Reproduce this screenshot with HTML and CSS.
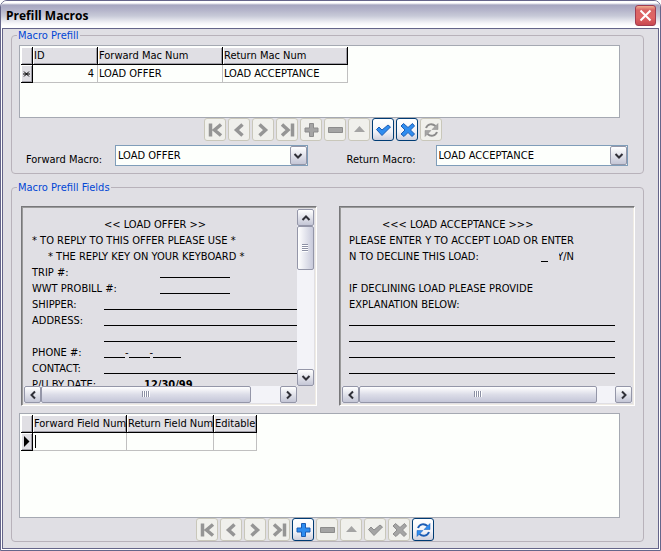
FILE: index.html
```
<!DOCTYPE html>
<html lang="en">
<head>
    <meta charset="UTF-8">
    <meta name="viewport" content="width=device-width, initial-scale=1.0">
    <title>Prefill Macros</title>
    <link rel="stylesheet" href="styles.css">
</head>
<body>
    <svg class="sprite" aria-hidden="true">
        <symbol id="i-first" viewBox="0 0 22 23"><path class="s" d="M6.500 5.500v13M17 6.500L10.500 12l6.500 5.500"/></symbol>
        <symbol id="i-prev" viewBox="0 0 22 23"><path class="s" d="M14.500 6.500L8.500 12l6 5.500"/></symbol>
        <symbol id="i-next" viewBox="0 0 22 23"><path class="s" d="M7.500 6.500L13.500 12l-6 5.500"/></symbol>
        <symbol id="i-last" viewBox="0 0 22 23"><path class="s" d="M16.500 5.500v13M6 6.500l6 5.500-6 5.500"/></symbol>
        <symbol id="i-add" viewBox="0 0 22 23"><path class="o" d="M9.500 5.500h4v4.500h4.500v4h-4.500v4.500h-4v-4.500h-4.500v-4h4.500z"/></symbol>
        <symbol id="i-del" viewBox="0 0 22 23"><path class="o" d="M4.500 9.500h14v5h-14z"/></symbol>
        <symbol id="i-up" viewBox="0 0 22 23"><path class="f" d="M11.500 8l5.500 6h-11z"/></symbol>
        <symbol id="i-ok" viewBox="0 0 22 23"><path class="o" d="M4.500 11.500l2.500-2.500 3 3 6-5 2.500 2-8.500 8.500z"/></symbol>
        <symbol id="i-cancel" viewBox="0 0 22 23"><path class="o" d="M5 8l2.500-2.500 4.500 4 4.500-4L18.500 8l-4 4 4 4-2.500 2.500-4-4-4 4L5 16l4-4z"/></symbol>
        <symbol id="i-refresh" viewBox="0 0 22 23"><path class="r" d="M6 10c1.500-4 6-5 9.500-2M17 14c-1.500 4-6 5-9.500 2"/><path class="o thin" d="M18 5.500v6h-6zM5 18.500v-6h6z"/></symbol>
        <symbol id="a-down" viewBox="0 0 10 10"><path class="a" d="M1.500 3L5 6.500 8.500 3"/></symbol>
        <symbol id="a-up" viewBox="0 0 10 10"><path class="a" d="M1.500 7L5 3.500 8.500 7"/></symbol>
        <symbol id="a-left" viewBox="0 0 10 10"><path class="a" d="M7 1.500L3.500 5 7 8.500"/></symbol>
        <symbol id="a-right" viewBox="0 0 10 10"><path class="a" d="M3 1.500L6.500 5 3 8.500"/></symbol>
    </svg>

    <div class="window">
        <header class="titlebar">
            <h1>Prefill Macros</h1>
            <button class="close" aria-label="Close">
                <svg viewBox="0 0 19 19"><path d="M4.500 4.500l10 10M14.500 4.500l-10 10"/></svg>
            </button>
        </header>

        <main class="content">
            <fieldset class="macros">
                <legend>Macro Prefill</legend>
                <div class="grid">
                    <table>
                        <thead>
                            <tr><th class="mark"></th><th class="id">ID</th><th class="mac">Forward Mac Num</th><th class="mac">Return Mac Num</th></tr>
                        </thead>
                        <tbody>
                            <tr>
                                <th class="mark"><svg viewBox="0 0 11 17"><path class="star" d="M2 9h7M3 6.500l5 5M8 6.500l-5 5"/></svg></th>
                                <td class="num">4</td><td>LOAD OFFER</td><td>LOAD ACCEPTANCE</td>
                            </tr>
                        </tbody>
                    </table>
                </div>
                <div class="nav">
                    <button disabled aria-label="First"><svg><use href="#i-first"/></svg></button>
                    <button disabled aria-label="Previous"><svg><use href="#i-prev"/></svg></button>
                    <button disabled aria-label="Next"><svg><use href="#i-next"/></svg></button>
                    <button disabled aria-label="Last"><svg><use href="#i-last"/></svg></button>
                    <button disabled aria-label="Insert"><svg><use href="#i-add"/></svg></button>
                    <button disabled aria-label="Delete"><svg><use href="#i-del"/></svg></button>
                    <button disabled aria-label="Edit"><svg><use href="#i-up"/></svg></button>
                    <button aria-label="Post"><svg><use href="#i-ok"/></svg></button>
                    <button aria-label="Cancel"><svg><use href="#i-cancel"/></svg></button>
                    <button disabled aria-label="Refresh"><svg><use href="#i-refresh"/></svg></button>
                </div>
                <div class="pickers">
                    <label for="forward">Forward Macro:</label>
                    <div class="combo">
                        <select id="forward"><option>LOAD OFFER</option></select>
                        <span class="arrow"><svg><use href="#a-down"/></svg></span>
                    </div>
                    <label for="return">Return Macro:</label>
                    <div class="combo">
                        <select id="return"><option>LOAD ACCEPTANCE</option></select>
                        <span class="arrow"><svg><use href="#a-down"/></svg></span>
                    </div>
                </div>
            </fieldset>

            <fieldset class="fields">
                <legend>Macro Prefill Fields</legend>
                <div class="previews">
                    <div class="preview both">
                        <div class="form">
                            <p class="head">&lt;&lt; LOAD OFFER &gt;&gt;</p>
                            <p>* TO REPLY TO THIS OFFER PLEASE USE *</p>
                            <p class="indent">* THE REPLY KEY ON YOUR KEYBOARD *</p>
                            <p class="row wide"><span>TRIP #:</span><i class="blank short"></i></p>
                            <p class="row wide"><span>WWT PROBILL #:</span><i class="blank short"></i></p>
                            <p class="row"><span>SHIPPER:</span><i class="blank"></i></p>
                            <p class="row"><span>ADDRESS:</span><i class="blank"></i></p>
                            <p class="row"><span></span><i class="blank"></i></p>
                            <p class="row"><span>PHONE #:</span><span class="phone"><i class="blank"></i>-<i class="blank"></i>-<i class="blank last"></i></span></p>
                            <p class="row"><span>CONTACT:</span><i class="blank"></i></p>
                            <p class="row date"><span>P/U BY DATE:</span><b>12/30/99</b></p>
                        </div>
                        <div class="vbar">
                            <button class="sb" aria-label="Scroll up"><svg><use href="#a-up"/></svg></button>
                            <div class="thumb"></div>
                            <button class="sb" aria-label="Scroll down"><svg><use href="#a-down"/></svg></button>
                        </div>
                        <div class="hbar">
                            <button class="sb" aria-label="Scroll left"><svg><use href="#a-left"/></svg></button>
                            <div class="track"><div class="thumb offer"></div></div>
                            <button class="sb" aria-label="Scroll right"><svg><use href="#a-right"/></svg></button>
                        </div>
                    </div>
                    <div class="preview">
                        <div class="form reply">
                            <p class="head">&lt;&lt;&lt; LOAD ACCEPTANCE &gt;&gt;&gt;</p>
                            <p>PLEASE ENTER Y TO ACCEPT LOAD OR ENTER</p>
                            <p class="row answer"><span>N TO DECLINE THIS LOAD:</span><i class="blank"></i><span class="yn">Y/N</span></p>
                            <p></p>
                            <p>IF DECLINING LOAD PLEASE PROVIDE</p>
                            <p>EXPLANATION BELOW:</p>
                            <p><i class="blank"></i></p>
                            <p><i class="blank"></i></p>
                            <p><i class="blank"></i></p>
                            <p><i class="blank"></i></p>
                        </div>
                        <div class="hbar">
                            <button class="sb" aria-label="Scroll left"><svg><use href="#a-left"/></svg></button>
                            <div class="track"><div class="thumb accept"></div></div>
                            <button class="sb" aria-label="Scroll right"><svg><use href="#a-right"/></svg></button>
                        </div>
                    </div>
                </div>
                <div class="grid tall">
                    <table>
                        <thead>
                            <tr><th class="mark"></th><th class="fwd">Forward Field Num</th><th class="ret">Return Field Num</th><th class="edit">Editable</th></tr>
                        </thead>
                        <tbody>
                            <tr>
                                <th class="mark"><svg viewBox="0 0 11 17"><path d="M3 3v11l5.500-5.500z"/></svg></th>
                                <td><span class="caret"></span></td><td></td><td></td>
                            </tr>
                        </tbody>
                    </table>
                </div>
                <div class="nav">
                    <button disabled aria-label="First"><svg><use href="#i-first"/></svg></button>
                    <button disabled aria-label="Previous"><svg><use href="#i-prev"/></svg></button>
                    <button disabled aria-label="Next"><svg><use href="#i-next"/></svg></button>
                    <button disabled aria-label="Last"><svg><use href="#i-last"/></svg></button>
                    <button aria-label="Insert"><svg><use href="#i-add"/></svg></button>
                    <button disabled aria-label="Delete"><svg><use href="#i-del"/></svg></button>
                    <button disabled aria-label="Edit"><svg><use href="#i-up"/></svg></button>
                    <button disabled aria-label="Post"><svg><use href="#i-ok"/></svg></button>
                    <button disabled aria-label="Cancel"><svg><use href="#i-cancel"/></svg></button>
                    <button aria-label="Refresh"><svg><use href="#i-refresh"/></svg></button>
                </div>
            </fieldset>
        </main>
    </div>
</body>
</html>
```
FILE: styles.css
```
* {
    box-sizing: border-box;
}
body {
    margin: 0;
    background-color: #fff;
    font-family: "DejaVu Sans Condensed", "Noto Sans", sans-serif;
    font-size: 11px;
    line-height: 16px;
    color: #000;
}
button, select {
    font: inherit;
    padding: 0;
    margin: 0;
}
p, h1 {
    margin: 0;
}
.sprite {
    display: none;
}

/* window frame */
.window {
    min-height: 100vh;
    display: flex;
    flex-direction: column;
    border: 1px solid #65658a;
    border-radius: 7px 7px 0 0;
    background-color: #fff;
    overflow: hidden;
}
.titlebar {
    display: flex;
    align-items: center;
    justify-content: space-between;
    height: 27px;
    padding: 2px 4px 0 5px;
    background: linear-gradient(#fff 0, #fff 2px, #a6a6c0 4px, #b4b4ca 9px, #c8cad8 15px, #f4f4f8 22px, #fff 25px);
}
.titlebar h1 {
    font-family: "Open Sans", sans-serif;
    font-size: 12px;
    font-weight: bold;
}
.close {
    width: 21px;
    height: 21px;
    border: 1px solid #a03c50;
    border-radius: 3px;
    background: linear-gradient(#f0b090, #d86464 4px, #e06464 60%, #c84850);
}
.close svg {
    display: block;
    width: 19px;
    height: 19px;
    fill: none;
    stroke: #fff;
    stroke-width: 2;
}
.content {
    flex: 1;
    margin: 0 1px 1px;
    padding: 0 14px 0 8px;
    border: 1px solid #65658a;
    background-color: #e0dfe4;
}

/* group boxes */
fieldset {
    margin: 0;
    min-width: 0;
    border: 1px solid #b8b2ba;
    border-radius: 4px;
}
.macros {
    padding: 3px 15px 5px 7px;
}
.fields {
    margin-top: 7px;
    padding: 12px 8px 0 7px;
}
legend {
    margin-left: -2px;
    padding: 0 1px;
    line-height: 13px;
    color: #0046d5;
}

/* record grids */
.grid {
    height: 73px;
    margin-right: 8px;
    padding: 1px;
    border: 1px solid #a5a9b2;
    background-color: #fdfffc;
}
.grid.tall {
    height: 105px;
    margin: 7px 15px 0 0;
}
table {
    border-collapse: separate;
    border-spacing: 0;
    table-layout: fixed;
    width: 1px;
}
th, td {
    height: 18px;
    padding: 0 0 0 1px;
    border-right: 1px solid #c0c0c0;
    border-bottom: 1px solid #c0c0c0;
    text-align: left;
    font-weight: normal;
    line-height: 16px;
    white-space: nowrap;
}
th {
    border-color: #000;
    background-color: #e0dfe4;
    box-shadow: inset 1px 1px #fff, inset -1px -1px #a09fa8;
}
.mark {
    width: 12px;
    padding: 0;
}
.mark svg {
    display: block;
    width: 11px;
    height: 17px;
}
.star {
    stroke: #000;
}
.id {
    width: 65px;
}
.mac {
    width: 125px;
}
.fwd {
    width: 94px;
}
.ret {
    width: 87px;
}
.edit {
    width: 43px;
}
.num {
    padding-right: 3px;
    text-align: right;
}
.caret {
    display: block;
    width: 1px;
    height: 13px;
    margin-left: 1px;
    background-color: #000;
}

/* navigator */
.nav {
    display: flex;
    justify-content: center;
    gap: 2px;
    margin-right: 2px;
}
.fields .nav {
    margin-right: 24px;
}
.nav button {
    width: 22px;
    height: 23px;
    border: 1px solid #003c74;
    border-radius: 3px;
    background: linear-gradient(#fff, #f2f2f8 60%, #d0d0dc);
}
.nav button:disabled {
    border-color: #c9c7ba;
    background: #f0f0ec;
}
.nav svg {
    display: block;
    width: 22px;
    height: 23px;
    margin: -1px;
    fill: #2f8cf0;
    stroke: #1c5cb4;
}
.nav button:disabled svg {
    fill: #a4a4a4;
    stroke: #8c8c8c;
}
.s {
    fill: none;
    stroke: #959595;
    stroke-width: 3.5;
}
.f {
    stroke: none;
}
.r {
    fill: none;
    stroke-width: 2;
}
.thin {
    stroke-width: 0.5;
}
.a {
    fill: none;
    stroke: #303038;
    stroke-width: 2;
}

/* macro pickers */
.pickers {
    display: grid;
    grid-template-columns: 89px 1fr 39px 89px 1fr;
    margin-top: 4px;
    padding-left: 7px;
}
.pickers label {
    padding-top: 7px;
}
.pickers label:nth-of-type(2) {
    grid-column: 4;
}
.combo {
    position: relative;
    height: 21px;
}
.combo select {
    display: block;
    width: 100%;
    height: 21px;
    padding: 0 20px 0 2px;
    border: 1px solid #7f9db9;
    border-radius: 0;
    appearance: none;
    background-color: #fdfffc;
    color: #000;
}
.arrow {
    position: absolute;
    top: 1px;
    right: 1px;
    display: flex;
    align-items: center;
    justify-content: center;
    width: 17px;
    height: 19px;
    border: 1px solid #9496a8;
    border-radius: 2px;
    background: linear-gradient(#fff, #c4c6d6);
    pointer-events: none;
}
.arrow svg, .sb svg {
    display: block;
    width: 10px;
    height: 10px;
}

/* macro previews */
.previews {
    display: grid;
    grid-template-columns: 1fr 1fr;
    gap: 22px;
    padding-left: 2px;
}
.preview {
    display: grid;
    grid-template: 177px 17px / minmax(0, 1fr);
    padding: 2px;
    border: 1px solid;
    border-color: #77777a #fff #fff #77777a;
    box-shadow: inset 1px 1px #9a9a9a, inset -1px -1px #efebe4;
}
.preview.both {
    grid-template-columns: minmax(0, 1fr) 17px;
}
.form {
    padding: 8px 0 0 8px;
    overflow: hidden;
    white-space: nowrap;
}
.reply {
    padding: 8px 17px 0 7px;
}
.form p {
    height: 16px;
}
.head {
    padding-left: 72px;
}
.reply .head {
    padding-left: 33px;
}
.indent {
    padding-left: 16px;
}
.row {
    display: grid;
    grid-template-columns: 72px 1fr;
}
.row.wide {
    grid-template-columns: 128px 1fr;
}
.row.date {
    grid-template-columns: 112px 1fr;
}
.row.answer {
    grid-template-columns: 192px 18px 1fr;
}
.blank {
    display: block;
    height: 13px;
    border-bottom: 1px solid #000;
}
.short {
    width: 70px;
}
.answer .blank {
    width: 7px;
}
.yn {
    display: flex;
    justify-content: flex-end;
    width: 15px;
    overflow: hidden;
}
.phone {
    display: flex;
}
.phone .blank {
    width: 21px;
}
.phone .last {
    width: 28px;
}

/* scroll bars */
.vbar {
    display: flex;
    flex-direction: column;
    justify-content: space-between;
    background-color: #f3f3f8;
}
.vbar .thumb {
    height: 44px;
    margin-bottom: auto;
    background: linear-gradient(90deg, #fff, #c8cadb);
}
.hbar {
    display: flex;
    background-color: #f3f3f8;
}
.track {
    flex: 1;
}
.sb {
    display: flex;
    align-items: center;
    justify-content: center;
    width: 17px;
    height: 17px;
    border: 1px solid #9496a8;
    border-radius: 2px;
    background: linear-gradient(#fff, #c4c6d6);
}
.thumb {
    position: relative;
    height: 17px;
    border: 1px solid #9496a8;
    border-radius: 2px;
    background: linear-gradient(#fff, #dcdde8 50%, #c4c6d8);
}
.thumb.offer {
    width: 88%;
}
.thumb.accept {
    width: 93%;
}
/* grip lines */
.thumb::after {
    content: "";
    position: absolute;
    top: 4px;
    left: calc(50% - 4px);
    width: 8px;
    height: 6px;
    background: repeating-linear-gradient(90deg, #8c90a4 0, #8c90a4 1px, #fff 1px, #fff 2px);
}
.vbar .thumb::after {
    top: calc(50% - 4px);
    left: 4px;
    width: 6px;
    height: 8px;
    background: repeating-linear-gradient(#8c90a4 0, #8c90a4 1px, #fff 1px, #fff 2px);
}
```
